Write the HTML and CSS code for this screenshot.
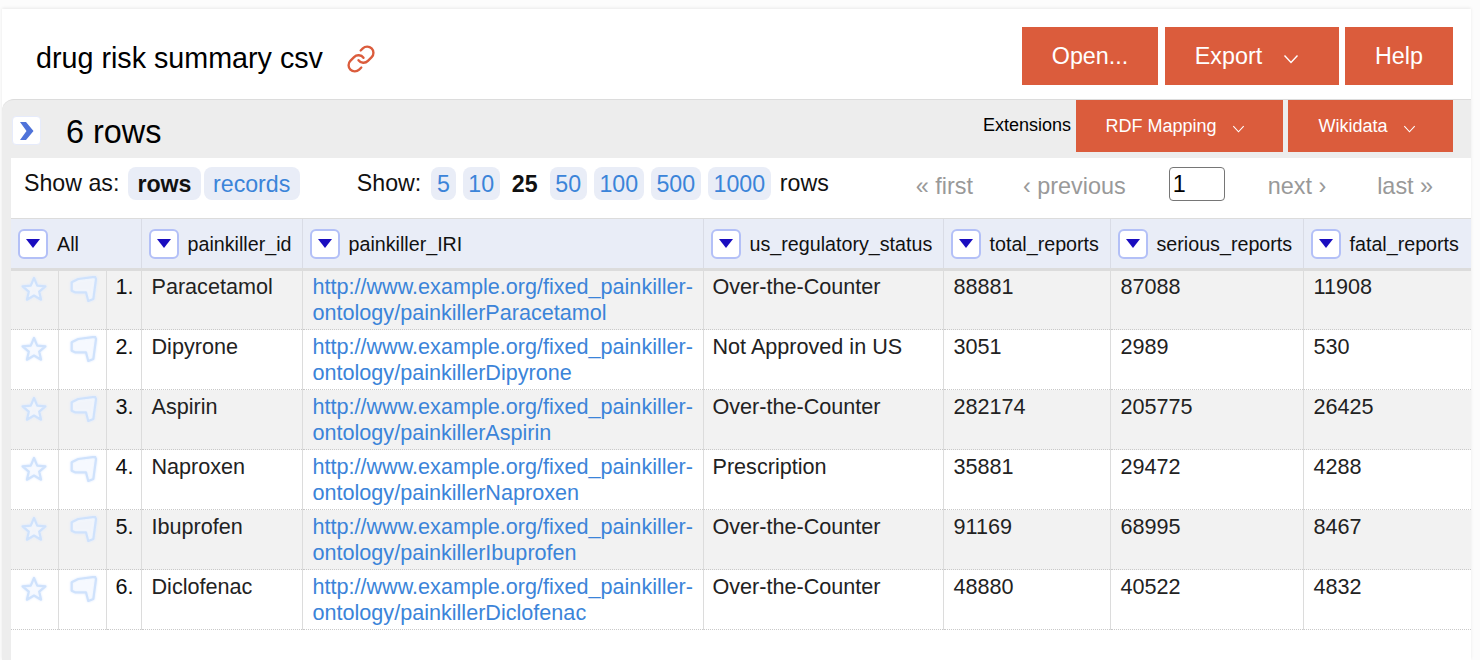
FILE: index.html

```html
<!doctype html>
<html>
<head>
<meta charset="utf-8">
<link rel="stylesheet" href="styles.css">
</head>
<body>
<svg class="defs" width="0" height="0">
  <symbol id="star" viewBox="0 0 26 26"><path d="M13 2 16.2 9.6 24.4 10.3 18.2 15.7 20.1 23.7 13 19.5 5.9 23.7 7.8 15.7 1.6 10.3 9.8 9.6Z"/></symbol>
  <symbol id="flag" viewBox="0 0 28 26"><path d="M1.7 6.3 8.3 3 25 .8 26 3 23.3 23 18.3 25 16 16.3 5 16.3 1.7 14.7Z"/></symbol>
  <symbol id="caret" viewBox="0 0 14 9"><path d="M0 0H14L7 9Z"/></symbol>
  <symbol id="chev" viewBox="0 0 16 10"><path d="M1.5 1.5 8 8.5 14.5 1.5"/></symbol>
</svg>

<div class="page">
  <header class="top">
    <h1 class="title">drug risk summary csv</h1>
    <svg class="link-icon" viewBox="0 0 24 24"><path d="M10 13a5 5 0 0 0 7.54.54l3-3a5 5 0 0 0-7.07-7.07l-1.72 1.71"/><path d="M14 11a5 5 0 0 0-7.54-.54l-3 3a5 5 0 0 0 7.07 7.07l1.71-1.71"/></svg>
    <div class="top-btns">
      <a class="btn btn-open">Open...</a>
      <a class="btn btn-export">Export<svg class="chev"><use href="#chev"/></svg></a>
      <a class="btn btn-help">Help</a>
    </div>
  </header>

  <section class="panel">
    <div class="panel-head">
      <span class="expand"><svg viewBox="0 0 15 18"><path d="M1 0H7L14.5 9 7 18H1L7.5 9Z"/></svg></span>
      <span class="count">6 rows</span>
      <div class="ext">
        <span class="ext-label">Extensions</span>
        <a class="btn btn-sm btn-rdf">RDF Mapping<svg class="chev chev-sm"><use href="#chev"/></svg></a>
        <a class="btn btn-sm btn-wiki">Wikidata<svg class="chev chev-sm"><use href="#chev"/></svg></a>
      </div>
    </div>

    <div class="content">
      <div class="controls">
        <span class="lbl">Show as:</span>
        <a class="pill pill-on view-rows">rows</a>
        <a class="pill view-records">records</a>
        <span class="lbl lbl-show">Show:</span>
        <a class="pill size">5</a>
        <a class="pill size">10</a>
        <b class="size-cur">25</b>
        <a class="pill size">50</a>
        <a class="pill size">100</a>
        <a class="pill size">500</a>
        <a class="pill size">1000</a>
        <span class="lbl lbl-rows">rows</span>
        <div class="pager">
          <span class="pg pg-first">« first</span>
          <span class="pg pg-prev">‹ previous</span>
          <input class="pg-input" value="1">
          <span class="pg pg-next">next ›</span>
          <span class="pg">last »</span>
        </div>
      </div>

      <table class="grid">
        <colgroup>
          <col class="c-star"><col class="c-flag"><col class="c-num"><col class="c-id"><col class="c-iri"><col class="c-status"><col class="c-total"><col class="c-serious"><col class="c-fatal">
        </colgroup>
        <thead>
          <tr>
            <th colspan="3"><span class="th"><span class="drop"><svg><use href="#caret"/></svg></span><span class="th-name">All</span></span></th>
            <th><span class="th"><span class="drop"><svg><use href="#caret"/></svg></span><span class="th-name">painkiller_id</span></span></th>
            <th><span class="th"><span class="drop"><svg><use href="#caret"/></svg></span><span class="th-name">painkiller_IRI</span></span></th>
            <th><span class="th"><span class="drop"><svg><use href="#caret"/></svg></span><span class="th-name">us_regulatory_status</span></span></th>
            <th><span class="th"><span class="drop"><svg><use href="#caret"/></svg></span><span class="th-name">total_reports</span></span></th>
            <th><span class="th"><span class="drop"><svg><use href="#caret"/></svg></span><span class="th-name">serious_reports</span></span></th>
            <th><span class="th"><span class="drop"><svg><use href="#caret"/></svg></span><span class="th-name">fatal_reports</span></span></th>
          </tr>
        </thead>
        <tbody>
          <tr>
            <td class="ico"><svg class="star"><use href="#star"/></svg></td><td class="ico ico-flag"><svg class="flag"><use href="#flag"/></svg></td><td class="num">1.</td>
            <td>Paracetamol</td><td><a>http://www.example.org/fixed_painkiller-ontology/painkillerParacetamol</a></td><td class="status">Over-the-Counter</td><td>88881</td><td>87088</td><td>11908</td>
          </tr>
          <tr>
            <td class="ico"><svg class="star"><use href="#star"/></svg></td><td class="ico ico-flag"><svg class="flag"><use href="#flag"/></svg></td><td class="num">2.</td>
            <td>Dipyrone</td><td><a>http://www.example.org/fixed_painkiller-ontology/painkillerDipyrone</a></td><td class="status">Not Approved in US</td><td>3051</td><td>2989</td><td>530</td>
          </tr>
          <tr>
            <td class="ico"><svg class="star"><use href="#star"/></svg></td><td class="ico ico-flag"><svg class="flag"><use href="#flag"/></svg></td><td class="num">3.</td>
            <td>Aspirin</td><td><a>http://www.example.org/fixed_painkiller-ontology/painkillerAspirin</a></td><td class="status">Over-the-Counter</td><td>282174</td><td>205775</td><td>26425</td>
          </tr>
          <tr>
            <td class="ico"><svg class="star"><use href="#star"/></svg></td><td class="ico ico-flag"><svg class="flag"><use href="#flag"/></svg></td><td class="num">4.</td>
            <td>Naproxen</td><td><a>http://www.example.org/fixed_painkiller-ontology/painkillerNaproxen</a></td><td class="status">Prescription</td><td>35881</td><td>29472</td><td>4288</td>
          </tr>
          <tr>
            <td class="ico"><svg class="star"><use href="#star"/></svg></td><td class="ico ico-flag"><svg class="flag"><use href="#flag"/></svg></td><td class="num">5.</td>
            <td>Ibuprofen</td><td><a>http://www.example.org/fixed_painkiller-ontology/painkillerIbuprofen</a></td><td class="status">Over-the-Counter</td><td>91169</td><td>68995</td><td>8467</td>
          </tr>
          <tr>
            <td class="ico"><svg class="star"><use href="#star"/></svg></td><td class="ico ico-flag"><svg class="flag"><use href="#flag"/></svg></td><td class="num">6.</td>
            <td>Diclofenac</td><td><a>http://www.example.org/fixed_painkiller-ontology/painkillerDiclofenac</a></td><td class="status">Over-the-Counter</td><td>48880</td><td>40522</td><td>4832</td>
          </tr>
        </tbody>
      </table>
    </div>
  </section>
</div>
</body>
</html>
```

FILE: styles.css

```css
html { font-family: "Liberation Sans", Arial, sans-serif; }
body { margin: 0; height: 660px; overflow: hidden; background: #fcfcfc; color: #111; }
.defs { position: absolute; }

.page { margin: 9px 9px 0 2px; height: 651px; background: #fff; box-shadow: 0 -1px 3px rgba(0,0,0,.08); overflow: hidden; }

/* top bar */
.top { display: flex; align-items: flex-start; height: 90px; }
.title { margin: 32px 0 0 34px; font-size: 28.7px; line-height: 34px; font-weight: normal; color: #000; }
.link-icon { width: 30px; height: 30px; margin: 35px 0 0 23px; fill: none; stroke: #db5c3c; stroke-width: 1.9; stroke-linecap: round; stroke-linejoin: round; }
.top-btns { display: flex; margin: 18px 18px 0 auto; }
.btn { display: flex; align-items: center; justify-content: center; background: #db5c3c; color: #fff; font-size: 23.3px; }
.btn-open { width: 136px; height: 58px; margin-right: 7px; }
.btn-export { box-sizing: border-box; width: 174px; height: 58px; margin-right: 6px; padding-right: 10px; }
.btn-help { width: 108px; height: 58px; }
.chev { width: 16px; height: 10px; margin: 6px 0 0 21px; fill: none; stroke: #fff; stroke-width: 1.4; }

/* panel */
.panel { background: #ededed; height: 561px; border-top: 1px solid #dcdcdc; border-top-left-radius: 12px; }
.panel-head { display: flex; align-items: flex-start; height: 58px; }
.expand { display: flex; align-items: center; justify-content: center; box-sizing: border-box; width: 29px; height: 29px; margin: 16px 0 0 10px; background: #fff; border: 1px solid #e6ebfb; border-radius: 4px; }
.expand svg { width: 15px; height: 18px; fill: #4f73d9; }
.count { margin: 14px 0 0 25px; font-size: 32.4px; line-height: 36px; color: #000; }
.ext { display: flex; margin: 0 18px 0 auto; }
.ext-label { margin: 14px 5px 0 0; font-size: 18px; line-height: 22px; color: #000; }
.btn-sm { box-sizing: border-box; height: 52px; font-size: 18px; }
.btn-rdf { width: 207px; margin-right: 5px; padding-right: 9px; }
.btn-wiki { width: 165px; padding-right: 7px; }
.chev-sm { width: 13px; height: 8px; margin: 6px 0 0 15px; }

.content { margin-left: 9px; height: 503px; background: #fff; }

/* show as / pager row */
.controls { display: flex; align-items: flex-start; height: 60px; box-sizing: border-box; padding: 9px 0 0 13px; font-size: 23.2px; }
.lbl { line-height: 33px; color: #111; }
.pill { display: block; height: 33px; line-height: 34px; padding: 0 9px; margin-left: 3px; border-radius: 8px; background: #e9edf7; color: #3b84d9; }
.pill-on { font-weight: bold; color: #111; }
.view-rows { margin-left: 9px; }
.view-records { padding: 0 9.5px; }
.lbl-show { margin: 0 3px 0 57px; }
.size { padding: 0 5.7px; margin-left: 7px; }
.size-cur { line-height: 34px; margin: 0 5px 0 12px; color: #111; }
.lbl-rows { margin-left: 9px; }
.pager { display: flex; margin-left: 87px; font-size: 23.4px; }
.pg { color: #999; line-height: 38px; }
.pg-first { margin-right: 50px; }
.pg-prev { margin-right: 43px; }
.pg-next { margin-right: 51px; }
.pg-input { box-sizing: border-box; width: 56px; height: 34px; margin: 0 43px 0 0; padding: 0 0 0 3px; font: inherit; color: #000; background: #fff; border: 1px solid #767676; border-radius: 4px; }

/* data table */
.grid { border-collapse: collapse; table-layout: fixed; width: 1460px; font-size: 21.6px; }
.c-star { width: 47px; } .c-flag { width: 48px; } .c-num { width: 35px; } .c-id { width: 161px; }
.c-iri { width: 401px; } .c-status { width: 240px; } .c-total { width: 167px; } .c-serious { width: 193px; } .c-fatal { width: 168px; }
.grid th { height: 49px; padding: 0 0 0 7px; background: #e9edf7; border-top: 1px solid #dcdcdc; border-left: 1px solid #d9dce6; border-bottom: 3px solid #dcdcdc; font-weight: normal; font-size: 19.7px; text-align: left; color: #111; white-space: nowrap; }
.grid th:first-child { border-left: 0; }
.th { display: flex; align-items: center; }
.th-name { padding: 2px 0 0 1px; }
.drop { display: flex; align-items: center; justify-content: center; box-sizing: border-box; width: 30px; height: 30px; margin-right: 8px; background: #fff; border: 2px solid #b3c0f7; border-radius: 6px; flex: none; }
.drop svg { width: 14px; height: 9px; fill: #1a0dbf; }
.grid td { box-sizing: border-box; height: 60px; padding: 4px 10px 0; vertical-align: top; line-height: 26px; border-left: 1px solid #dcdcdc; border-bottom: 1px dotted #c9c9c9; color: #222; }
.grid td:first-child { border-left: 0; }
.grid tbody tr:nth-child(odd) td { background: #f2f2f2; }
.grid a { color: #3b84d9; }
.grid td.status { padding-left: 9px; }
.grid td.ico { padding: 6px 0 0; text-align: center; }
.grid td.ico-flag { padding-left: 3px; }
.grid td.num { padding: 4px 0 0 9px; color: #111; }
.grid tbody tr:first-child td { padding-top: 3px; }
.grid tbody tr:first-child td.ico { padding-top: 5px; }
.ico svg { display: inline-block; fill: #fff; fill-opacity: .4; stroke: #cfe2fc; stroke-width: 2.2; stroke-linejoin: round; overflow: visible; filter: drop-shadow(0 0 1px #dce9ff); }
.star { width: 26px; height: 26px; }
.flag { width: 28px; height: 26px; }
```
